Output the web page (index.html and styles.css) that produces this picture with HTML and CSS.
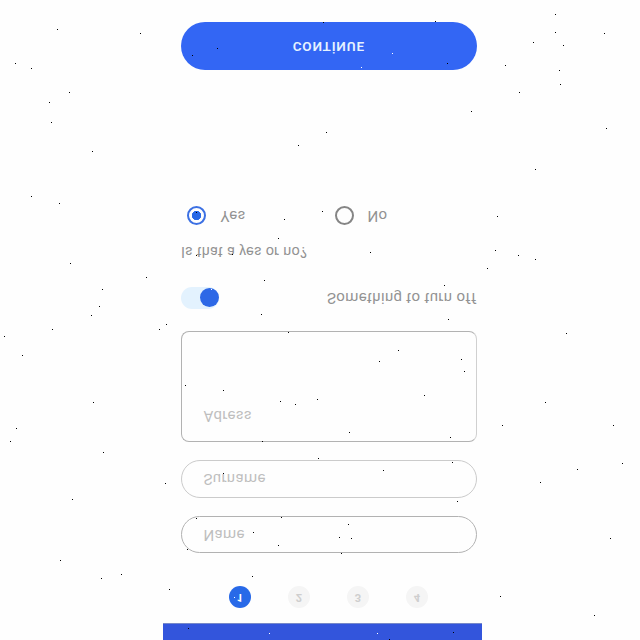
FILE: index.html
```
<!DOCTYPE html>
<html lang="en">
<head>
<meta charset="utf-8">
<title>Form</title>
<link rel="stylesheet" href="styles.css">
</head>
<body>
<main class="screen">
  <div class="topbar"></div>
  <div class="content">
    <div class="steps">
      <span class="step active">1</span><span class="step">2</span><span class="step">3</span><span class="step">4</span>
    </div>
    <div class="field name">Name</div>
    <div class="field surname">Surname</div>
    <div class="field address">Adress</div>
    <div class="switch-row">
      <span class="switch"><span class="knob"></span></span>
      <span class="switch-label">Something to turn off</span>
    </div>
    <div class="question">Is that a yes or no?</div>
    <div class="choices">
      <div class="choice"><span class="radio checked"></span><span class="yes">Yes</span></div>
      <div class="choice"><span class="radio"></span><span class="no">No</span></div>
    </div>
    <div class="button"><span>CONTİNUE</span></div>
  </div>
</main>
<svg class="specks" width="640" height="640" viewBox="0 0 640 640" shape-rendering="crispEdges">
  <path class="dark" d="M57 29h1M140 33h1M15 63h1M31 68h1M69 92h1M49 102h1M51 122h1M92 151h1M31 196h1M59 203h1M70 263h1M146 277h1M102 289h1M99 306h1M91 315h1
  M166 324h1M159 329h1M52 329h1M4 336h1M22 355h1M93 402h1M16 428h1M10 441h1M103 452h1M165 483h1M72 499h1M60 560h1M121 574h1M101 578h1M169 589h1
  M555 14h1M555 32h1M604 33h1M533 42h1M563 45h1M505 65h1M559 70h1M560 84h1M519 92h1M471 111h1M606 128h1M535 169h1M497 216h1M495 250h1M518 255h1M535 259h1M487 268h1
  M566 333h1M545 402h1M502 425h1M613 425h1M622 463h1M577 469h1M540 482h1M610 538h1M500 596h1M594 615h1
  M323 22h1M435 21h1M217 48h1M192 55h1M447 63h1M326 132h1M298 145h1M284 219h1M322 211h1M278 238h1M196 212h1M196 255h1M232 254h1M264 280h1M261 314h1M370 252h1M444 285h1M448 319h1
  M288 332h1M185 385h1M223 390h1M280 401h1M295 404h1M317 399h1M262 441h1M398 350h1M379 361h1M461 359h1M464 371h1M424 395h1M349 432h1M450 437h1
  M318 458h1M223 473h1M196 518h1M281 517h1M253 532h1M278 545h1M187 549h1M252 576h1M188 628h1M452 462h1M383 470h1M457 501h1M348 524h1M339 537h1M351 538h1M341 553h1M453 632h1M389 639h1" transform="translate(0 .5)"/>
  <path class="light" d="M361 67h1M392 53h1M211 289h1M234 597h1M269 633h1M377 633h1" transform="translate(0 .5)"/>
</svg>
</body>
</html>
```
FILE: styles.css
```
* { box-sizing: border-box; }
body {
  margin: 0;
  height: 640px;
  overflow: hidden;
  background: #fefefe;
  color: #929292;
  font: 15px/20px Roboto, sans-serif;
}
/* The whole screen is mirrored top to bottom. */
.screen {
  width: 319px;
  height: 640px;
  margin-left: 163px;
  transform: scaleY(-1);
}
.topbar {
  height: 17px;
  background: #3355dc;
  border-bottom: 1px solid #7688c9;
}
.content { width: 295.5px; margin-left: 18px; }
.steps {
  display: flex;
  gap: 37px;
  padding: 15px 0 0 48px;
  height: 70px;
}
.step {
  width: 22px;
  height: 22px;
  border-radius: 50%;
  background: #f5f5f5;
  color: #cecece;
  font-size: 11px;
  font-weight: 700;
  line-height: 22px;
  text-align: center;
}
.step.active { background: #2869e8; color: #fff; }
.field {
  height: 37px;
  border: 1px solid #b2b2b2;
  border-radius: 19px;
  padding-left: 21.5px;
  line-height: 35px;
  letter-spacing: .35px;
  color: #bebebe;
}
.surname { margin-top: 18px; height: 38px; border-color: #cbcbcb; line-height: 37px; }
.address {
  margin-top: 18px;
  height: 111px;
  border-radius: 8px;
  border-right-color: #d0d0d0;
  line-height: 51px;
  letter-spacing: .25px;
}
.switch-row {
  display: flex;
  justify-content: space-between;
  align-items: center;
  height: 22px;
  margin-top: 22px;
}
.switch {
  width: 38px;
  height: 22px;
  padding: 2px 0 0 19px;
  border-radius: 11px;
  background: #e3f2fe;
}
.knob {
  display: block;
  width: 19px;
  height: 19px;
  border-radius: 50%;
  background: #2d68e6;
}
.switch-label { letter-spacing: .35px; white-space: nowrap; }
.question {
  margin-top: 26px;
  font-size: 14.5px;
  letter-spacing: .15px;
  word-spacing: .4px;
}
.choices {
  display: grid;
  grid-template-columns: 148.5px 1fr;
  margin: 15px 0 0 5.5px;
}
.choice { display: flex; align-items: center; height: 20px; gap: 15px; letter-spacing: .2px; }
.no { margin-left: -1.5px; }
.radio {
  width: 19px;
  height: 19px;
  border: 2px solid #858585;
  border-radius: 50%;
}
.radio.checked {
  border-color: #3c70e3;
  background: radial-gradient(circle, #2868e6 4.4px, transparent 5px);
}
.button {
  height: 48px;
  margin-top: 136px;
  border-radius: 24px;
  background: #3366f4;
  color: #e6f2ff;
  font-size: 13.5px;
  font-weight: 600;
  line-height: 47px;
  letter-spacing: .8px;
  text-align: center;
}
.specks { position: absolute; left: 0; top: 0; }
.dark { stroke: #000; }
.light { stroke: #fff; }
```
